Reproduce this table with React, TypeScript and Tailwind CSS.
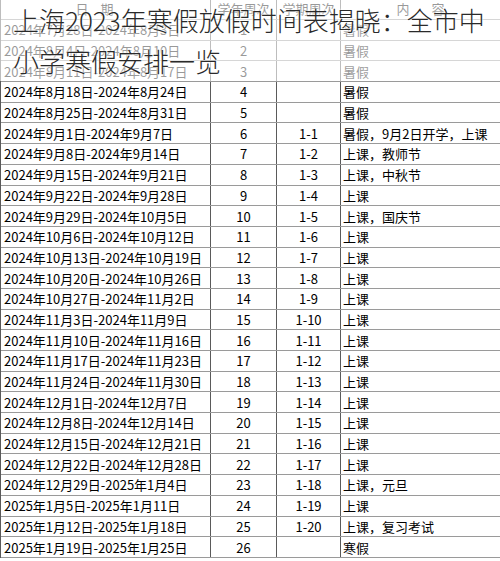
import React from 'react';

type Row = [string, string, string, string];

const rows: Row[] = [
  ['2024年7月28日-2024年8月3日', '1', '', '暑假'],
  ['2024年8月4日-2024年8月10日', '2', '', '暑假'],
  ['2024年8月11日-2024年8月17日', '3', '', '暑假'],
  ['2024年8月18日-2024年8月24日', '4', '', '暑假'],
  ['2024年8月25日-2024年8月31日', '5', '', '暑假'],
  ['2024年9月1日-2024年9月7日', '6', '1-1', '暑假，9月2日开学，上课'],
  ['2024年9月8日-2024年9月14日', '7', '1-2', '上课，教师节'],
  ['2024年9月15日-2024年9月21日', '8', '1-3', '上课，中秋节'],
  ['2024年9月22日-2024年9月28日', '9', '1-4', '上课'],
  ['2024年9月29日-2024年10月5日', '10', '1-5', '上课，国庆节'],
  ['2024年10月6日-2024年10月12日', '11', '1-6', '上课'],
  ['2024年10月13日-2024年10月19日', '12', '1-7', '上课'],
  ['2024年10月20日-2024年10月26日', '13', '1-8', '上课'],
  ['2024年10月27日-2024年11月2日', '14', '1-9', '上课'],
  ['2024年11月3日-2024年11月9日', '15', '1-10', '上课'],
  ['2024年11月10日-2024年11月16日', '16', '1-11', '上课'],
  ['2024年11月17日-2024年11月23日', '17', '1-12', '上课'],
  ['2024年11月24日-2024年11月30日', '18', '1-13', '上课'],
  ['2024年12月1日-2024年12月7日', '19', '1-14', '上课'],
  ['2024年12月8日-2024年12月14日', '20', '1-15', '上课'],
  ['2024年12月15日-2024年12月21日', '21', '1-16', '上课'],
  ['2024年12月22日-2024年12月28日', '22', '1-17', '上课'],
  ['2024年12月29日-2025年1月4日', '23', '1-18', '上课，元旦'],
  ['2025年1月5日-2025年1月11日', '24', '1-19', '上课'],
  ['2025年1月12日-2025年1月18日', '25', '1-20', '上课，复习考试'],
  ['2025年1月19日-2025年1月25日', '26', '', '寒假'],
];

const font = "font-['Noto_Sans_CJK_SC','Noto_Sans',sans-serif]";

function TableRow({ cells }: { cells: Row }) {
  return (
    <div className="flex h-[20.7px] border-b border-[#9a9a9a] text-[13px] leading-none text-black">
      <div className="flex w-[210px] items-center border-r border-[#5a5a5a] pl-[3px]">{cells[0]}</div>
      <div className="flex w-[66px] items-center justify-center border-r border-[#5a5a5a]">{cells[1]}</div>
      <div className="flex w-[64px] items-center justify-center border-r border-[#5a5a5a]">{cells[2]}</div>
      <div className="flex flex-1 items-center pl-[2px]">{cells[3]}</div>
    </div>
  );
}

export default function App() {
  return (
    <div className={`relative h-[561px] w-[500px] overflow-hidden bg-white ${font}`}>
      <div className="-mt-[11px] border-l border-[#5a5a5a]">
        {/* Header */}
        <div className="flex h-[31px] border-b border-[#9a9a9a] text-[13px] leading-none text-black">
          <div className="flex w-[210px] items-center justify-center gap-[12px] border-r border-[#5a5a5a] pr-[22px] pt-[8px]">
            <span>日</span>
            <span>期</span>
          </div>
          <div className="flex w-[66px] items-center justify-center border-r border-[#5a5a5a] pt-[8px]">学年周次</div>
          <div className="flex w-[64px] items-center justify-center border-r border-[#5a5a5a] pt-[8px]">学期周次</div>
          <div className="flex flex-1 items-center justify-center gap-[22px] pt-[8px]">
            <span>内</span>
            <span>容</span>
          </div>
        </div>
        {rows.map((r, i) => (
          <TableRow key={i} cells={r} />
        ))}
      </div>

      {/* faded title overlay */}
      <div className="absolute left-0 right-0 top-0 h-[81px] bg-white/60" />
      <div className="absolute left-[13px] top-0 text-[26px] font-light leading-[40.5px] text-[#2a2a2a] [text-shadow:0_0_2px_#fff,0_0_3px_#fff]">
        上海2023年寒假放假时间表揭晓：全市中
        <br />
        小学寒假安排一览
      </div>
    </div>
  );
}
